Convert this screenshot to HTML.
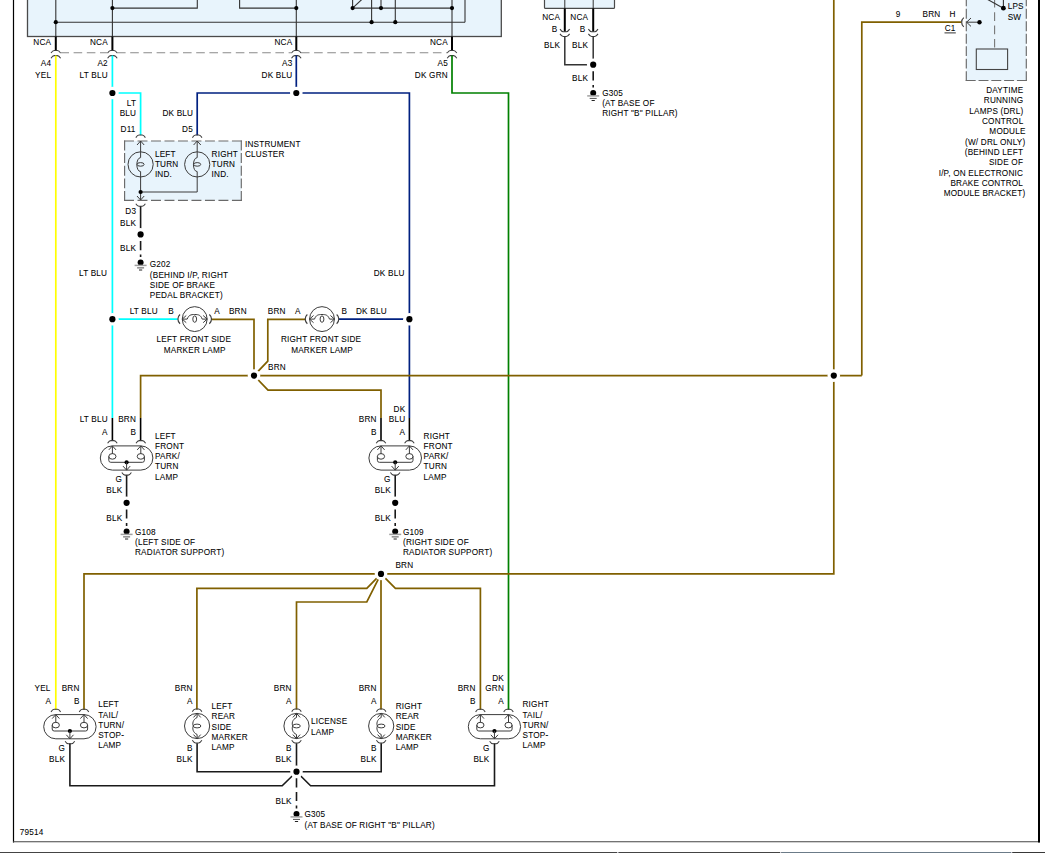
<!DOCTYPE html>
<html><head><meta charset="utf-8"><style>
html,body{margin:0;padding:0;background:#fff;}
svg{display:block;}
text{font-family:"Liberation Sans",sans-serif;stroke:#000;stroke-width:0.06px;}
</style></head><body>
<svg width="1045" height="853" viewBox="0 0 1045 853">
<rect width="1045" height="853" fill="#fff"/>
<line x1="13.5" y1="0" x2="13.5" y2="842.5" stroke="#000" stroke-width="1.2" />
<line x1="13" y1="841.8" x2="1040" y2="841.8" stroke="#444" stroke-width="1.1" />
<line x1="1039" y1="0" x2="1039" y2="842.5" stroke="#000" stroke-width="2" />
<rect x="0" y="852" width="1045" height="1" fill="#444"/>
<rect x="617" y="852" width="1.5" height="1" fill="#c8c8d0"/>
<rect x="780" y="852" width="1.5" height="1" fill="#c8c8d0"/>
<rect x="781.5" y="852" width="229.5" height="1" fill="#6b7b88"/>
<rect x="1011" y="852" width="1.5" height="1" fill="#c8c8d0"/>
<rect x="1012.5" y="852" width="32.5" height="1" fill="#383838"/>
<rect x="27.5" y="-3" width="473.8" height="39.5" fill="#e8f4fc" stroke="#4a4a4a" stroke-width="1.3"/>
<line x1="55.8" y1="-1" x2="55.8" y2="36.5" stroke="#333" stroke-width="1.1" />
<line x1="55.8" y1="22.2" x2="465" y2="22.2" stroke="#333" stroke-width="1.1" />
<line x1="465" y1="22.2" x2="465" y2="-1" stroke="#333" stroke-width="1.1" />
<polyline points="112.4,-1 112.4,36.5" fill="none" stroke="#333" stroke-width="1.1" stroke-linejoin="miter" />
<polyline points="112.4,8.1 197.3,8.1 197.3,-1" fill="none" stroke="#333" stroke-width="1.1" stroke-linejoin="miter" />
<polyline points="239.6,-1 239.6,8.1 296.3,8.1" fill="none" stroke="#333" stroke-width="1.1" stroke-linejoin="miter" />
<line x1="296.3" y1="-1" x2="296.3" y2="36.5" stroke="#333" stroke-width="1.1" />
<line x1="352.6" y1="-1" x2="352.6" y2="8.1" stroke="#333" stroke-width="1.1" />
<line x1="352.6" y1="8.1" x2="361.8" y2="-0.5" stroke="#333" stroke-width="1.1" />
<line x1="352.6" y1="8.1" x2="452" y2="8.1" stroke="#333" stroke-width="1.1" />
<line x1="371.6" y1="-1" x2="371.6" y2="22.2" stroke="#333" stroke-width="1.1" />
<line x1="381" y1="-1" x2="381" y2="8.1" stroke="#333" stroke-width="1.1" />
<line x1="395.3" y1="-1" x2="395.3" y2="22.2" stroke="#333" stroke-width="1.1" />
<line x1="452" y1="-1" x2="452" y2="36.5" stroke="#333" stroke-width="1.1" />
<circle cx="55.8" cy="22.2" r="2.1" fill="#000"/>
<circle cx="112.4" cy="8.1" r="2.1" fill="#000"/>
<circle cx="296.3" cy="8.1" r="2.1" fill="#000"/>
<circle cx="352.6" cy="8.1" r="2.1" fill="#000"/>
<circle cx="381" cy="8.1" r="2.1" fill="#000"/>
<circle cx="452" cy="8.1" r="2.1" fill="#000"/>
<circle cx="371.6" cy="22.2" r="2.1" fill="#000"/>
<circle cx="395.3" cy="22.2" r="2.1" fill="#000"/>
<line x1="55.8" y1="36.5" x2="55.8" y2="50.6" stroke="#000" stroke-width="2.0" />
<path d="M51.0,53.0 C52.3,51.0 53.2,50.4 54.199999999999996,50.4 L57.4,50.4 C58.39999999999999,50.4 59.3,51.0 60.599999999999994,53.0" fill="none" stroke="#3c3c3c" stroke-width="1.05" />
<path d="M51.0,58.2 C52.3,56.2 53.2,55.6 54.199999999999996,55.6 L57.4,55.6 C58.39999999999999,55.6 59.3,56.2 60.599999999999994,58.2" fill="none" stroke="#3c3c3c" stroke-width="1.05" />
<line x1="112.4" y1="36.5" x2="112.4" y2="50.6" stroke="#000" stroke-width="2.0" />
<path d="M107.60000000000001,53.0 C108.9,51.0 109.80000000000001,50.4 110.80000000000001,50.4 L114.0,50.4 C115.0,50.4 115.9,51.0 117.2,53.0" fill="none" stroke="#3c3c3c" stroke-width="1.05" />
<path d="M107.60000000000001,58.2 C108.9,56.2 109.80000000000001,55.6 110.80000000000001,55.6 L114.0,55.6 C115.0,55.6 115.9,56.2 117.2,58.2" fill="none" stroke="#3c3c3c" stroke-width="1.05" />
<line x1="296.3" y1="36.5" x2="296.3" y2="50.6" stroke="#000" stroke-width="2.0" />
<path d="M291.5,53.0 C292.8,51.0 293.7,50.4 294.7,50.4 L297.90000000000003,50.4 C298.90000000000003,50.4 299.8,51.0 301.1,53.0" fill="none" stroke="#3c3c3c" stroke-width="1.05" />
<path d="M291.5,58.2 C292.8,56.2 293.7,55.6 294.7,55.6 L297.90000000000003,55.6 C298.90000000000003,55.6 299.8,56.2 301.1,58.2" fill="none" stroke="#3c3c3c" stroke-width="1.05" />
<line x1="452.0" y1="36.5" x2="452.0" y2="50.6" stroke="#000" stroke-width="2.0" />
<path d="M447.2,53.0 C448.5,51.0 449.4,50.4 450.4,50.4 L453.6,50.4 C454.6,50.4 455.5,51.0 456.8,53.0" fill="none" stroke="#3c3c3c" stroke-width="1.05" />
<path d="M447.2,58.2 C448.5,56.2 449.4,55.6 450.4,55.6 L453.6,55.6 C454.6,55.6 455.5,56.2 456.8,58.2" fill="none" stroke="#3c3c3c" stroke-width="1.05" />
<line x1="60.4" y1="52.7" x2="107.80000000000001" y2="52.7" stroke="#8a8a8a" stroke-width="1.1" stroke-dasharray="8.6 4.6"/>
<line x1="117.0" y1="52.7" x2="291.7" y2="52.7" stroke="#8a8a8a" stroke-width="1.1" stroke-dasharray="8.6 4.6"/>
<line x1="300.90000000000003" y1="52.7" x2="447.4" y2="52.7" stroke="#8a8a8a" stroke-width="1.1" stroke-dasharray="8.6 4.6"/>
<text x="51.2" y="45" text-anchor="end" font-size="8.2" letter-spacing="0.2" fill="#000" >NCA</text>
<text x="51.2" y="66" text-anchor="end" font-size="8.2" letter-spacing="0.2" fill="#000" >A4</text>
<text x="51.2" y="78" text-anchor="end" font-size="8.2" letter-spacing="0.2" fill="#000" >YEL</text>
<text x="107.8" y="45" text-anchor="end" font-size="8.2" letter-spacing="0.2" fill="#000" >NCA</text>
<text x="107.8" y="66" text-anchor="end" font-size="8.2" letter-spacing="0.2" fill="#000" >A2</text>
<text x="107.8" y="78" text-anchor="end" font-size="8.2" letter-spacing="0.2" fill="#000" >LT BLU</text>
<text x="292.4" y="45" text-anchor="end" font-size="8.2" letter-spacing="0.2" fill="#000" >NCA</text>
<text x="292.4" y="66" text-anchor="end" font-size="8.2" letter-spacing="0.2" fill="#000" >A3</text>
<text x="292.4" y="78" text-anchor="end" font-size="8.2" letter-spacing="0.2" fill="#000" >DK BLU</text>
<text x="447.9" y="45" text-anchor="end" font-size="8.2" letter-spacing="0.2" fill="#000" >NCA</text>
<text x="447.9" y="66" text-anchor="end" font-size="8.2" letter-spacing="0.2" fill="#000" >A5</text>
<text x="447.9" y="78" text-anchor="end" font-size="8.2" letter-spacing="0.2" fill="#000" >DK GRN</text>
<line x1="55.8" y1="55.5" x2="55.8" y2="709.8" stroke="#ffff00" stroke-width="1.7" />
<line x1="112.4" y1="55.5" x2="112.4" y2="418" stroke="#00ffff" stroke-width="1.7" />
<line x1="112.4" y1="418" x2="112.4" y2="440.8" stroke="#000" stroke-width="1.6" />
<polyline points="112.4,93 140.6,93 140.6,135.3" fill="none" stroke="#00ffff" stroke-width="1.7" stroke-linejoin="miter" />
<polyline points="112.4,319.2 177.6,319.2" fill="none" stroke="#00ffff" stroke-width="1.7" stroke-linejoin="miter" />
<line x1="296.3" y1="55.5" x2="296.3" y2="93" stroke="#002080" stroke-width="1.7" />
<polyline points="197.2,135.3 197.2,93 409.4,93 409.4,418" fill="none" stroke="#002080" stroke-width="1.7" stroke-linejoin="miter" />
<line x1="409.4" y1="418" x2="409.4" y2="440.8" stroke="#000" stroke-width="1.6" />
<line x1="339" y1="319.2" x2="409.4" y2="319.2" stroke="#002080" stroke-width="1.7" />
<polyline points="452,55.5 452,93 508.5,93 508.5,709.8" fill="none" stroke="#008000" stroke-width="1.7" stroke-linejoin="miter" />
<polyline points="211.7,319.3 254,319.3 254,375.6" fill="none" stroke="#806000" stroke-width="1.7" stroke-linejoin="miter" />
<polyline points="305.6,319.3 267.8,319.3 267.8,361.2 254,375.6" fill="none" stroke="#806000" stroke-width="1.7" stroke-linejoin="miter" />
<polyline points="140.6,418 140.6,375.6 861.8,375.6" fill="none" stroke="#806000" stroke-width="1.7" stroke-linejoin="miter" />
<polyline points="861.8,375.6 861.8,22.2 961,22.2" fill="none" stroke="#806000" stroke-width="1.7" stroke-linejoin="miter" />
<line x1="140.6" y1="418" x2="140.6" y2="440.8" stroke="#000" stroke-width="1.6" />
<polyline points="254,375.6 268,390.2 381,390.2 381,418" fill="none" stroke="#806000" stroke-width="1.7" stroke-linejoin="miter" />
<line x1="381" y1="418" x2="381" y2="440.8" stroke="#000" stroke-width="1.6" />
<polyline points="84,709.8 84,573.9 833.8,573.9 833.8,-1" fill="none" stroke="#806000" stroke-width="1.7" stroke-linejoin="miter" />
<polyline points="381,573.9 366.8,588.4 196.9,588.4 196.9,709.6" fill="none" stroke="#806000" stroke-width="1.7" stroke-linejoin="miter" />
<polyline points="381,573.9 366.8,602 296.5,602 296.5,709.6" fill="none" stroke="#806000" stroke-width="1.7" stroke-linejoin="miter" />
<line x1="381" y1="573.9" x2="381" y2="709.6" stroke="#806000" stroke-width="1.7" />
<polyline points="381,573.9 395.4,588.4 480.4,588.4 480.4,709.8" fill="none" stroke="#806000" stroke-width="1.7" stroke-linejoin="miter" />
<rect x="124.6" y="141" width="116.7" height="59.4" fill="#e8f4fc"/>
<line x1="124.6" y1="141" x2="241.3" y2="141" stroke="#6a6a6a" stroke-width="1.15" stroke-dasharray="8.8 4.688" stroke-linecap="square"/>
<line x1="241.3" y1="141" x2="241.3" y2="200.4" stroke="#6a6a6a" stroke-width="1.15" stroke-dasharray="8.8 3.850" stroke-linecap="square"/>
<line x1="124.6" y1="200.4" x2="241.3" y2="200.4" stroke="#6a6a6a" stroke-width="1.15" stroke-dasharray="8.8 4.688" stroke-linecap="square"/>
<line x1="124.6" y1="141" x2="124.6" y2="200.4" stroke="#6a6a6a" stroke-width="1.15" stroke-dasharray="8.8 3.850" stroke-linecap="square"/>
<path d="M135.79999999999998,137.6 C137.1,135.6 137.99999999999997,135.0 139.0,135.0 L142.2,135.0 C143.20000000000002,135.0 144.1,135.6 145.4,137.6" fill="none" stroke="#3c3c3c" stroke-width="1.05" />
<path d="M192.39999999999998,137.6 C193.7,135.6 194.59999999999997,135.0 195.6,135.0 L198.79999999999998,135.0 C199.8,135.0 200.7,135.6 202.0,137.6" fill="none" stroke="#3c3c3c" stroke-width="1.05" />
<path d="M137.0,145 L140.6,141 L144.2,145" fill="none" stroke="#3c3c3c" stroke-width="1.0" />
<path d="M193.6,145 L197.2,141 L200.79999999999998,145" fill="none" stroke="#3c3c3c" stroke-width="1.0" />
<circle cx="140.6" cy="164.4" r="12.6" fill="none" stroke="#3c3c3c" stroke-width="1"/>
<path d="M140.6,157.6 C135.6,157.9 135.6,171.4 140.6,171.6" fill="none" stroke="#3c3c3c" stroke-width="1.0" />
<ellipse cx="140.6" cy="164.4" rx="3.5" ry="1.8" fill="none" stroke="#3c3c3c" stroke-width="1"/>
<circle cx="197.2" cy="164.4" r="12.6" fill="none" stroke="#3c3c3c" stroke-width="1"/>
<path d="M197.2,157.6 C192.2,157.9 192.2,171.4 197.2,171.6" fill="none" stroke="#3c3c3c" stroke-width="1.0" />
<ellipse cx="197.2" cy="164.4" rx="3.5" ry="1.8" fill="none" stroke="#3c3c3c" stroke-width="1"/>
<line x1="140.6" y1="141" x2="140.6" y2="157.6" stroke="#3c3c3c" stroke-width="1.0" />
<line x1="140.6" y1="171.6" x2="140.6" y2="200" stroke="#3c3c3c" stroke-width="1.0" />
<path d="M197.2,141 L197.2,157.6 M197.2,171.6 L197.2,192 L140.6,192" fill="none" stroke="#3c3c3c" stroke-width="1.0" />
<circle cx="140.6" cy="192" r="2.1" fill="#000"/>
<path d="M137.0,196 L140.6,200 L144.2,196" fill="none" stroke="#3c3c3c" stroke-width="1.0" />
<path d="M135.79999999999998,203.70000000000002 C137.1,205.70000000000002 137.99999999999997,206.3 139.0,206.3 L142.2,206.3 C143.20000000000002,206.3 144.1,205.70000000000002 145.4,203.70000000000002" fill="none" stroke="#3c3c3c" stroke-width="1.05" />
<text x="245" y="147" text-anchor="start" font-size="8.2" letter-spacing="0.2" fill="#000" >INSTRUMENT</text>
<text x="245" y="157" text-anchor="start" font-size="8.2" letter-spacing="0.2" fill="#000" >CLUSTER</text>
<text x="154.9" y="157" text-anchor="start" font-size="8.2" letter-spacing="0.2" fill="#000" >LEFT</text>
<text x="154.9" y="167" text-anchor="start" font-size="8.2" letter-spacing="0.2" fill="#000" >TURN</text>
<text x="154.9" y="177" text-anchor="start" font-size="8.2" letter-spacing="0.2" fill="#000" >IND.</text>
<text x="211.6" y="157" text-anchor="start" font-size="8.2" letter-spacing="0.2" fill="#000" >RIGHT</text>
<text x="211.6" y="167" text-anchor="start" font-size="8.2" letter-spacing="0.2" fill="#000" >TURN</text>
<text x="211.6" y="177" text-anchor="start" font-size="8.2" letter-spacing="0.2" fill="#000" >IND.</text>
<text x="136.2" y="106" text-anchor="end" font-size="8.2" letter-spacing="0.2" fill="#000" >LT</text>
<text x="136.2" y="116" text-anchor="end" font-size="8.2" letter-spacing="0.2" fill="#000" >BLU</text>
<text x="193.2" y="116" text-anchor="end" font-size="8.2" letter-spacing="0.2" fill="#000" >DK BLU</text>
<text x="135.6" y="132" text-anchor="end" font-size="8.2" letter-spacing="0.2" fill="#000" >D11</text>
<text x="192.89999999999998" y="132" text-anchor="end" font-size="8.2" letter-spacing="0.2" fill="#000" >D5</text>
<line x1="140.6" y1="206.3" x2="140.6" y2="234.4" stroke="#1a1a1a" stroke-width="1.6" />
<text x="136.2" y="214" text-anchor="end" font-size="8.2" letter-spacing="0.2" fill="#000" >D3</text>
<text x="136.2" y="226" text-anchor="end" font-size="8.2" letter-spacing="0.2" fill="#000" >BLK</text>
<text x="136.2" y="251" text-anchor="end" font-size="8.2" letter-spacing="0.2" fill="#000" >BLK</text>
<line x1="140.6" y1="241.0" x2="140.6" y2="257.0" stroke="#1a1a1a" stroke-width="1.6" stroke-dasharray="9.2 4.4"/>
<circle cx="140.6" cy="234.4" r="6.3" fill="#fff"/>
<circle cx="140.6" cy="234.4" r="3.1" fill="#000"/>
<circle cx="140.6" cy="262.5" r="3.0" fill="#000"/>
<line x1="134.6" y1="265.4" x2="146.6" y2="265.4" stroke="#a0a0a0" stroke-width="1.5" />
<line x1="137.1" y1="267.9" x2="144.1" y2="267.9" stroke="#505050" stroke-width="1.0" />
<line x1="139.0" y1="270.0" x2="142.2" y2="270.0" stroke="#222" stroke-width="1.0" />
<text x="149.8" y="267" text-anchor="start" font-size="8.2" letter-spacing="0.2" fill="#000" >G202</text>
<text x="149.8" y="278" text-anchor="start" font-size="8.2" letter-spacing="0.2" fill="#000" >(BEHIND I/P, RIGHT</text>
<text x="149.8" y="288" text-anchor="start" font-size="8.2" letter-spacing="0.2" fill="#000" >SIDE OF BRAKE</text>
<text x="149.8" y="298" text-anchor="start" font-size="8.2" letter-spacing="0.2" fill="#000" >PEDAL BRACKET)</text>
<text x="107.2" y="276" text-anchor="end" font-size="8.2" letter-spacing="0.2" fill="#000" >LT BLU</text>
<text x="404.5" y="276" text-anchor="end" font-size="8.2" letter-spacing="0.2" fill="#000" >DK BLU</text>
<path d="M180.05,314.5 A6,6 0 0 0 180.05,323.70000000000005" fill="none" stroke="#3c3c3c" stroke-width="1.2" />
<path d="M209.34999999999997,314.5 A6,6 0 0 1 209.34999999999997,323.70000000000005" fill="none" stroke="#3c3c3c" stroke-width="1.2" />
<circle cx="194.7" cy="319.1" r="12.45" fill="none" stroke="#3c3c3c" stroke-width="1"/>
<path d="M186.25,315.5 L182.25,319.1 L186.25,322.70000000000005" fill="none" stroke="#3c3c3c" stroke-width="1.0" />
<path d="M203.14999999999998,315.5 L207.14999999999998,319.1 L203.14999999999998,322.70000000000005" fill="none" stroke="#3c3c3c" stroke-width="1.0" />
<path d="M182.25,319.1 L187.2,319.1 C188.7,315.1 190.7,314.5 194.7,314.5 C198.7,314.5 200.7,315.1 202.2,319.1 L207.14999999999998,319.1" fill="none" stroke="#3c3c3c" stroke-width="1.0" />
<ellipse cx="194.7" cy="319.1" rx="1.9" ry="3.2" fill="none" stroke="#3c3c3c" stroke-width="1"/>
<path d="M307.35,314.5 A6,6 0 0 0 307.35,323.70000000000005" fill="none" stroke="#3c3c3c" stroke-width="1.2" />
<path d="M336.65,314.5 A6,6 0 0 1 336.65,323.70000000000005" fill="none" stroke="#3c3c3c" stroke-width="1.2" />
<circle cx="322" cy="319.1" r="12.45" fill="none" stroke="#3c3c3c" stroke-width="1"/>
<path d="M313.55,315.5 L309.55,319.1 L313.55,322.70000000000005" fill="none" stroke="#3c3c3c" stroke-width="1.0" />
<path d="M330.45,315.5 L334.45,319.1 L330.45,322.70000000000005" fill="none" stroke="#3c3c3c" stroke-width="1.0" />
<path d="M309.55,319.1 L314.5,319.1 C316,315.1 318,314.5 322,314.5 C326,314.5 328,315.1 329.5,319.1 L334.45,319.1" fill="none" stroke="#3c3c3c" stroke-width="1.0" />
<ellipse cx="322" cy="319.1" rx="1.9" ry="3.2" fill="none" stroke="#3c3c3c" stroke-width="1"/>
<text x="129.7" y="314" text-anchor="start" font-size="8.2" letter-spacing="0.2" fill="#000" >LT BLU</text>
<text x="168.3" y="314" text-anchor="start" font-size="8.2" letter-spacing="0.2" fill="#000" >B</text>
<text x="214.3" y="314" text-anchor="start" font-size="8.2" letter-spacing="0.2" fill="#000" >A</text>
<text x="228.9" y="314" text-anchor="start" font-size="8.2" letter-spacing="0.2" fill="#000" >BRN</text>
<text x="267.8" y="314" text-anchor="start" font-size="8.2" letter-spacing="0.2" fill="#000" >BRN</text>
<text x="295" y="314" text-anchor="start" font-size="8.2" letter-spacing="0.2" fill="#000" >A</text>
<text x="341.6" y="314" text-anchor="start" font-size="8.2" letter-spacing="0.2" fill="#000" >B</text>
<text x="356" y="314" text-anchor="start" font-size="8.2" letter-spacing="0.2" fill="#000" >DK BLU</text>
<text x="193.79999999999998" y="342" text-anchor="middle" font-size="8.2" letter-spacing="0.2" fill="#000" >LEFT FRONT SIDE</text>
<text x="194.7" y="353" text-anchor="middle" font-size="8.2" letter-spacing="0.2" fill="#000" >MARKER LAMP</text>
<text x="321.1" y="342" text-anchor="middle" font-size="8.2" letter-spacing="0.2" fill="#000" >RIGHT FRONT SIDE</text>
<text x="322.1" y="353" text-anchor="middle" font-size="8.2" letter-spacing="0.2" fill="#000" >MARKER LAMP</text>
<text x="268" y="370" text-anchor="start" font-size="8.2" letter-spacing="0.2" fill="#000" >BRN</text>
<path d="M107.60000000000001,443.2 C108.9,441.2 109.80000000000001,440.59999999999997 110.80000000000001,440.59999999999997 L114.0,440.59999999999997 C115.0,440.59999999999997 115.9,441.2 117.2,443.2" fill="none" stroke="#3c3c3c" stroke-width="1.05" />
<path d="M136.0,443.2 C137.3,441.2 138.2,440.59999999999997 139.20000000000002,440.59999999999997 L142.4,440.59999999999997 C143.40000000000003,440.59999999999997 144.3,441.2 145.60000000000002,443.2" fill="none" stroke="#3c3c3c" stroke-width="1.05" />
<path d="M112.4,445.9 L140.8,445.9 A12.1,12.1 0 0 1 140.8,470.09999999999997 L112.4,470.09999999999997 A12.1,12.1 0 0 1 112.4,445.9 Z" fill="none" stroke="#3c3c3c" stroke-width="1.0" />
<path d="M108.80000000000001,449.9 L112.4,445.9 L116.0,449.9" fill="none" stroke="#3c3c3c" stroke-width="1.0" />
<path d="M137.20000000000002,449.9 L140.8,445.9 L144.4,449.9" fill="none" stroke="#3c3c3c" stroke-width="1.0" />
<path d="M112.4,445.9 L112.4,454.0 M108.80000000000001,456.4 L108.80000000000001,460.29999999999995 Q108.80000000000001,462.29999999999995 110.80000000000001,462.29999999999995 L142.4,462.29999999999995 Q144.4,462.29999999999995 144.4,460.29999999999995 L144.4,456.4 M140.8,445.9 L140.8,454.0" fill="none" stroke="#3c3c3c" stroke-width="1.0" />
<ellipse cx="112.4" cy="456.4" rx="3.6" ry="2.8" fill="none" stroke="#3c3c3c" stroke-width="1"/>
<ellipse cx="140.8" cy="456.4" rx="3.6" ry="2.8" fill="none" stroke="#3c3c3c" stroke-width="1"/>
<circle cx="126.60000000000001" cy="462.29999999999995" r="2.1" fill="#000"/>
<line x1="126.60000000000001" y1="462.29999999999995" x2="126.60000000000001" y2="470.09999999999997" stroke="#3c3c3c" stroke-width="1.0" />
<path d="M123.00000000000001,466.09999999999997 L126.60000000000001,470.09999999999997 L130.20000000000002,466.09999999999997" fill="none" stroke="#3c3c3c" stroke-width="1.0" />
<path d="M121.80000000000001,472.49999999999994 C123.10000000000001,474.49999999999994 124.00000000000001,475.09999999999997 125.00000000000001,475.09999999999997 L128.20000000000002,475.09999999999997 C129.20000000000002,475.09999999999997 130.1,474.49999999999994 131.4,472.49999999999994" fill="none" stroke="#3c3c3c" stroke-width="1.05" />
<path d="M376.2,443.2 C377.5,441.2 378.4,440.59999999999997 379.4,440.59999999999997 L382.6,440.59999999999997 C383.6,440.59999999999997 384.5,441.2 385.8,443.2" fill="none" stroke="#3c3c3c" stroke-width="1.05" />
<path d="M404.59999999999997,443.2 C405.9,441.2 406.79999999999995,440.59999999999997 407.79999999999995,440.59999999999997 L411.0,440.59999999999997 C412.0,440.59999999999997 412.9,441.2 414.2,443.2" fill="none" stroke="#3c3c3c" stroke-width="1.05" />
<path d="M381,445.9 L409.4,445.9 A12.1,12.1 0 0 1 409.4,470.09999999999997 L381,470.09999999999997 A12.1,12.1 0 0 1 381,445.9 Z" fill="none" stroke="#3c3c3c" stroke-width="1.0" />
<path d="M377.4,449.9 L381,445.9 L384.6,449.9" fill="none" stroke="#3c3c3c" stroke-width="1.0" />
<path d="M405.79999999999995,449.9 L409.4,445.9 L413.0,449.9" fill="none" stroke="#3c3c3c" stroke-width="1.0" />
<path d="M381,445.9 L381,454.0 M377.4,456.4 L377.4,460.29999999999995 Q377.4,462.29999999999995 379.4,462.29999999999995 L411.0,462.29999999999995 Q413.0,462.29999999999995 413.0,460.29999999999995 L413.0,456.4 M409.4,445.9 L409.4,454.0" fill="none" stroke="#3c3c3c" stroke-width="1.0" />
<ellipse cx="381" cy="456.4" rx="3.6" ry="2.8" fill="none" stroke="#3c3c3c" stroke-width="1"/>
<ellipse cx="409.4" cy="456.4" rx="3.6" ry="2.8" fill="none" stroke="#3c3c3c" stroke-width="1"/>
<circle cx="395.2" cy="462.29999999999995" r="2.1" fill="#000"/>
<line x1="395.2" y1="462.29999999999995" x2="395.2" y2="470.09999999999997" stroke="#3c3c3c" stroke-width="1.0" />
<path d="M391.59999999999997,466.09999999999997 L395.2,470.09999999999997 L398.8,466.09999999999997" fill="none" stroke="#3c3c3c" stroke-width="1.0" />
<path d="M390.4,472.49999999999994 C391.7,474.49999999999994 392.59999999999997,475.09999999999997 393.59999999999997,475.09999999999997 L396.8,475.09999999999997 C397.8,475.09999999999997 398.7,474.49999999999994 400.0,472.49999999999994" fill="none" stroke="#3c3c3c" stroke-width="1.05" />
<text x="107.9" y="422" text-anchor="end" font-size="8.2" letter-spacing="0.2" fill="#000" >LT BLU</text>
<text x="136.1" y="422" text-anchor="end" font-size="8.2" letter-spacing="0.2" fill="#000" >BRN</text>
<text x="107.7" y="435" text-anchor="end" font-size="8.2" letter-spacing="0.2" fill="#000" >A</text>
<text x="136.2" y="435" text-anchor="end" font-size="8.2" letter-spacing="0.2" fill="#000" >B</text>
<text x="122.0" y="482" text-anchor="end" font-size="8.2" letter-spacing="0.2" fill="#000" >G</text>
<text x="122.3" y="493" text-anchor="end" font-size="8.2" letter-spacing="0.2" fill="#000" >BLK</text>
<text x="122.3" y="521" text-anchor="end" font-size="8.2" letter-spacing="0.2" fill="#000" >BLK</text>
<text x="155" y="439" text-anchor="start" font-size="8.2" letter-spacing="0.2" fill="#000" >LEFT</text>
<text x="155" y="449" text-anchor="start" font-size="8.2" letter-spacing="0.2" fill="#000" >FRONT</text>
<text x="155" y="459" text-anchor="start" font-size="8.2" letter-spacing="0.2" fill="#000" >PARK/</text>
<text x="155" y="469" text-anchor="start" font-size="8.2" letter-spacing="0.2" fill="#000" >TURN</text>
<text x="155" y="480" text-anchor="start" font-size="8.2" letter-spacing="0.2" fill="#000" >LAMP</text>
<line x1="126.6" y1="475.3" x2="126.6" y2="502.8" stroke="#1a1a1a" stroke-width="1.6" />
<line x1="126.6" y1="509.40000000000003" x2="126.6" y2="526.0" stroke="#1a1a1a" stroke-width="1.6" stroke-dasharray="9.2 4.4"/>
<circle cx="126.6" cy="502.8" r="6.3" fill="#fff"/>
<circle cx="126.6" cy="502.8" r="3.1" fill="#000"/>
<circle cx="126.6" cy="531.5" r="3.0" fill="#000"/>
<line x1="120.6" y1="534.4" x2="132.6" y2="534.4" stroke="#a0a0a0" stroke-width="1.5" />
<line x1="123.1" y1="536.9" x2="130.1" y2="536.9" stroke="#505050" stroke-width="1.0" />
<line x1="125.0" y1="539.0" x2="128.2" y2="539.0" stroke="#222" stroke-width="1.0" />
<text x="135" y="535" text-anchor="start" font-size="8.2" letter-spacing="0.2" fill="#000" >G108</text>
<text x="135" y="545" text-anchor="start" font-size="8.2" letter-spacing="0.2" fill="#000" >(LEFT SIDE OF</text>
<text x="135" y="555" text-anchor="start" font-size="8.2" letter-spacing="0.2" fill="#000" >RADIATOR SUPPORT)</text>
<text x="376.7" y="422" text-anchor="end" font-size="8.2" letter-spacing="0.2" fill="#000" >BRN</text>
<text x="405.4" y="412" text-anchor="end" font-size="8.2" letter-spacing="0.2" fill="#000" >DK</text>
<text x="405.4" y="422" text-anchor="end" font-size="8.2" letter-spacing="0.2" fill="#000" >BLU</text>
<text x="376.7" y="435" text-anchor="end" font-size="8.2" letter-spacing="0.2" fill="#000" >B</text>
<text x="405.2" y="435" text-anchor="end" font-size="8.2" letter-spacing="0.2" fill="#000" >A</text>
<text x="390.59999999999997" y="482" text-anchor="end" font-size="8.2" letter-spacing="0.2" fill="#000" >G</text>
<text x="390.8" y="493" text-anchor="end" font-size="8.2" letter-spacing="0.2" fill="#000" >BLK</text>
<text x="390.8" y="521" text-anchor="end" font-size="8.2" letter-spacing="0.2" fill="#000" >BLK</text>
<text x="423.6" y="439" text-anchor="start" font-size="8.2" letter-spacing="0.2" fill="#000" >RIGHT</text>
<text x="423.6" y="449" text-anchor="start" font-size="8.2" letter-spacing="0.2" fill="#000" >FRONT</text>
<text x="423.6" y="459" text-anchor="start" font-size="8.2" letter-spacing="0.2" fill="#000" >PARK/</text>
<text x="423.6" y="469" text-anchor="start" font-size="8.2" letter-spacing="0.2" fill="#000" >TURN</text>
<text x="423.6" y="480" text-anchor="start" font-size="8.2" letter-spacing="0.2" fill="#000" >LAMP</text>
<line x1="395.2" y1="475.3" x2="395.2" y2="502.8" stroke="#1a1a1a" stroke-width="1.6" />
<line x1="395.2" y1="509.40000000000003" x2="395.2" y2="526.0" stroke="#1a1a1a" stroke-width="1.6" stroke-dasharray="9.2 4.4"/>
<circle cx="395.2" cy="502.8" r="6.3" fill="#fff"/>
<circle cx="395.2" cy="502.8" r="3.1" fill="#000"/>
<circle cx="395.2" cy="531.5" r="3.0" fill="#000"/>
<line x1="389.2" y1="534.4" x2="401.2" y2="534.4" stroke="#a0a0a0" stroke-width="1.5" />
<line x1="391.7" y1="536.9" x2="398.7" y2="536.9" stroke="#505050" stroke-width="1.0" />
<line x1="393.59999999999997" y1="539.0" x2="396.8" y2="539.0" stroke="#222" stroke-width="1.0" />
<text x="403" y="535" text-anchor="start" font-size="8.2" letter-spacing="0.2" fill="#000" >G109</text>
<text x="403" y="545" text-anchor="start" font-size="8.2" letter-spacing="0.2" fill="#000" >(RIGHT SIDE OF</text>
<text x="403" y="555" text-anchor="start" font-size="8.2" letter-spacing="0.2" fill="#000" >RADIATOR SUPPORT)</text>
<text x="395.4" y="568" text-anchor="start" font-size="8.2" letter-spacing="0.2" fill="#000" >BRN</text>
<path d="M51.0,711.9000000000001 C52.3,709.9000000000001 53.2,709.3000000000001 54.199999999999996,709.3000000000001 L57.4,709.3000000000001 C58.39999999999999,709.3000000000001 59.3,709.9000000000001 60.599999999999994,711.9000000000001" fill="none" stroke="#3c3c3c" stroke-width="1.05" />
<path d="M79.2,711.9000000000001 C80.5,709.9000000000001 81.4,709.3000000000001 82.4,709.3000000000001 L85.6,709.3000000000001 C86.6,709.3000000000001 87.5,709.9000000000001 88.8,711.9000000000001" fill="none" stroke="#3c3c3c" stroke-width="1.05" />
<path d="M55.8,714.6 L84,714.6 A12.1,12.1 0 0 1 84,738.8000000000001 L55.8,738.8000000000001 A12.1,12.1 0 0 1 55.8,714.6 Z" fill="none" stroke="#3c3c3c" stroke-width="1.0" />
<path d="M52.199999999999996,718.6 L55.8,714.6 L59.4,718.6" fill="none" stroke="#3c3c3c" stroke-width="1.0" />
<path d="M80.4,718.6 L84,714.6 L87.6,718.6" fill="none" stroke="#3c3c3c" stroke-width="1.0" />
<path d="M55.8,714.6 L55.8,722.7 M52.199999999999996,725.1 L52.199999999999996,729.0 Q52.199999999999996,731.0 54.199999999999996,731.0 L85.6,731.0 Q87.6,731.0 87.6,729.0 L87.6,725.1 M84,714.6 L84,722.7" fill="none" stroke="#3c3c3c" stroke-width="1.0" />
<ellipse cx="55.8" cy="725.1" rx="3.6" ry="2.8" fill="none" stroke="#3c3c3c" stroke-width="1"/>
<ellipse cx="84" cy="725.1" rx="3.6" ry="2.8" fill="none" stroke="#3c3c3c" stroke-width="1"/>
<circle cx="69.9" cy="731.0" r="2.1" fill="#000"/>
<line x1="69.9" y1="731.0" x2="69.9" y2="738.8000000000001" stroke="#3c3c3c" stroke-width="1.0" />
<path d="M66.30000000000001,734.8000000000001 L69.9,738.8000000000001 L73.5,734.8000000000001" fill="none" stroke="#3c3c3c" stroke-width="1.0" />
<path d="M65.10000000000001,741.2 C66.4,743.2 67.30000000000001,743.8000000000001 68.30000000000001,743.8000000000001 L71.5,743.8000000000001 C72.5,743.8000000000001 73.4,743.2 74.7,741.2" fill="none" stroke="#3c3c3c" stroke-width="1.05" />
<path d="M192.29999999999998,711.6 C193.6,709.6 194.49999999999997,709.0 195.5,709.0 L198.7,709.0 C199.70000000000002,709.0 200.6,709.6 201.9,711.6" fill="none" stroke="#3c3c3c" stroke-width="1.05" />
<path d="M192.29999999999998,740.3 C193.6,742.3 194.49999999999997,742.9 195.5,742.9 L198.7,742.9 C199.70000000000002,742.9 200.6,742.3 201.9,740.3" fill="none" stroke="#3c3c3c" stroke-width="1.05" />
<circle cx="197.1" cy="726" r="12.6" fill="none" stroke="#3c3c3c" stroke-width="1"/>
<path d="M193.5,717.4 L197.1,713.4 L200.7,717.4" fill="none" stroke="#3c3c3c" stroke-width="1.0" />
<path d="M193.5,734.6 L197.1,738.6 L200.7,734.6" fill="none" stroke="#3c3c3c" stroke-width="1.0" />
<path d="M197.1,713.4 L197.1,717.5 C192.6,719.5 192.29999999999998,724 193.29999999999998,726 C192.29999999999998,728 192.6,732.5 197.1,734.5 L197.1,738.6" fill="none" stroke="#3c3c3c" stroke-width="1.0" />
<ellipse cx="197.1" cy="726" rx="3.8" ry="1.9" fill="none" stroke="#3c3c3c" stroke-width="1"/>
<path d="M291.7,711.6 C293.0,709.6 293.9,709.0 294.9,709.0 L298.1,709.0 C299.1,709.0 300.0,709.6 301.3,711.6" fill="none" stroke="#3c3c3c" stroke-width="1.05" />
<path d="M291.7,740.3 C293.0,742.3 293.9,742.9 294.9,742.9 L298.1,742.9 C299.1,742.9 300.0,742.3 301.3,740.3" fill="none" stroke="#3c3c3c" stroke-width="1.05" />
<circle cx="296.5" cy="726" r="12.6" fill="none" stroke="#3c3c3c" stroke-width="1"/>
<path d="M292.9,717.4 L296.5,713.4 L300.1,717.4" fill="none" stroke="#3c3c3c" stroke-width="1.0" />
<path d="M292.9,734.6 L296.5,738.6 L300.1,734.6" fill="none" stroke="#3c3c3c" stroke-width="1.0" />
<path d="M296.5,713.4 L296.5,717.5 C292.0,719.5 291.7,724 292.7,726 C291.7,728 292.0,732.5 296.5,734.5 L296.5,738.6" fill="none" stroke="#3c3c3c" stroke-width="1.0" />
<ellipse cx="296.5" cy="726" rx="3.8" ry="1.9" fill="none" stroke="#3c3c3c" stroke-width="1"/>
<path d="M376.4,711.6 C377.7,709.6 378.59999999999997,709.0 379.59999999999997,709.0 L382.8,709.0 C383.8,709.0 384.7,709.6 386.0,711.6" fill="none" stroke="#3c3c3c" stroke-width="1.05" />
<path d="M376.4,740.3 C377.7,742.3 378.59999999999997,742.9 379.59999999999997,742.9 L382.8,742.9 C383.8,742.9 384.7,742.3 386.0,740.3" fill="none" stroke="#3c3c3c" stroke-width="1.05" />
<circle cx="381.2" cy="726" r="12.6" fill="none" stroke="#3c3c3c" stroke-width="1"/>
<path d="M377.59999999999997,717.4 L381.2,713.4 L384.8,717.4" fill="none" stroke="#3c3c3c" stroke-width="1.0" />
<path d="M377.59999999999997,734.6 L381.2,738.6 L384.8,734.6" fill="none" stroke="#3c3c3c" stroke-width="1.0" />
<path d="M381.2,713.4 L381.2,717.5 C376.7,719.5 376.4,724 377.4,726 C376.4,728 376.7,732.5 381.2,734.5 L381.2,738.6" fill="none" stroke="#3c3c3c" stroke-width="1.0" />
<ellipse cx="381.2" cy="726" rx="3.8" ry="1.9" fill="none" stroke="#3c3c3c" stroke-width="1"/>
<path d="M475.59999999999997,711.9000000000001 C476.9,709.9000000000001 477.79999999999995,709.3000000000001 478.79999999999995,709.3000000000001 L482.0,709.3000000000001 C483.0,709.3000000000001 483.9,709.9000000000001 485.2,711.9000000000001" fill="none" stroke="#3c3c3c" stroke-width="1.05" />
<path d="M503.7,711.9000000000001 C505.0,709.9000000000001 505.9,709.3000000000001 506.9,709.3000000000001 L510.1,709.3000000000001 C511.09999999999997,709.3000000000001 511.99999999999994,709.9000000000001 513.3,711.9000000000001" fill="none" stroke="#3c3c3c" stroke-width="1.05" />
<path d="M480.4,714.6 L508.5,714.6 A12.1,12.1 0 0 1 508.5,738.8000000000001 L480.4,738.8000000000001 A12.1,12.1 0 0 1 480.4,714.6 Z" fill="none" stroke="#3c3c3c" stroke-width="1.0" />
<path d="M476.79999999999995,718.6 L480.4,714.6 L484.0,718.6" fill="none" stroke="#3c3c3c" stroke-width="1.0" />
<path d="M504.9,718.6 L508.5,714.6 L512.1,718.6" fill="none" stroke="#3c3c3c" stroke-width="1.0" />
<path d="M480.4,714.6 L480.4,722.7 M476.79999999999995,725.1 L476.79999999999995,729.0 Q476.79999999999995,731.0 478.79999999999995,731.0 L510.1,731.0 Q512.1,731.0 512.1,729.0 L512.1,725.1 M508.5,714.6 L508.5,722.7" fill="none" stroke="#3c3c3c" stroke-width="1.0" />
<ellipse cx="480.4" cy="725.1" rx="3.6" ry="2.8" fill="none" stroke="#3c3c3c" stroke-width="1"/>
<ellipse cx="508.5" cy="725.1" rx="3.6" ry="2.8" fill="none" stroke="#3c3c3c" stroke-width="1"/>
<circle cx="494.45" cy="731.0" r="2.1" fill="#000"/>
<line x1="494.45" y1="731.0" x2="494.45" y2="738.8000000000001" stroke="#3c3c3c" stroke-width="1.0" />
<path d="M490.84999999999997,734.8000000000001 L494.45,738.8000000000001 L498.05,734.8000000000001" fill="none" stroke="#3c3c3c" stroke-width="1.0" />
<path d="M489.65,741.2 C490.95,743.2 491.84999999999997,743.8000000000001 492.84999999999997,743.8000000000001 L496.05,743.8000000000001 C497.05,743.8000000000001 497.95,743.2 499.25,741.2" fill="none" stroke="#3c3c3c" stroke-width="1.05" />
<text x="50.6" y="691" text-anchor="end" font-size="8.2" letter-spacing="0.2" fill="#000" >YEL</text>
<text x="79.60000000000001" y="691" text-anchor="end" font-size="8.2" letter-spacing="0.2" fill="#000" >BRN</text>
<text x="51.1" y="704" text-anchor="end" font-size="8.2" letter-spacing="0.2" fill="#000" >A</text>
<text x="79.60000000000001" y="704" text-anchor="end" font-size="8.2" letter-spacing="0.2" fill="#000" >B</text>
<text x="65.2" y="751" text-anchor="end" font-size="8.2" letter-spacing="0.2" fill="#000" >G</text>
<text x="65.2" y="762" text-anchor="end" font-size="8.2" letter-spacing="0.2" fill="#000" >BLK</text>
<text x="98.2" y="707" text-anchor="start" font-size="8.2" letter-spacing="0.2" fill="#000" >LEFT</text>
<text x="98.2" y="718" text-anchor="start" font-size="8.2" letter-spacing="0.2" fill="#000" >TAIL/</text>
<text x="98.2" y="728" text-anchor="start" font-size="8.2" letter-spacing="0.2" fill="#000" >TURN/</text>
<text x="98.2" y="738" text-anchor="start" font-size="8.2" letter-spacing="0.2" fill="#000" >STOP-</text>
<text x="98.2" y="748" text-anchor="start" font-size="8.2" letter-spacing="0.2" fill="#000" >LAMP</text>
<text x="192.7" y="691" text-anchor="end" font-size="8.2" letter-spacing="0.2" fill="#000" >BRN</text>
<text x="192.7" y="704" text-anchor="end" font-size="8.2" letter-spacing="0.2" fill="#000" >A</text>
<text x="192.7" y="751" text-anchor="end" font-size="8.2" letter-spacing="0.2" fill="#000" >B</text>
<text x="192.7" y="762" text-anchor="end" font-size="8.2" letter-spacing="0.2" fill="#000" >BLK</text>
<text x="291.7" y="691" text-anchor="end" font-size="8.2" letter-spacing="0.2" fill="#000" >BRN</text>
<text x="291.7" y="704" text-anchor="end" font-size="8.2" letter-spacing="0.2" fill="#000" >A</text>
<text x="291.7" y="751" text-anchor="end" font-size="8.2" letter-spacing="0.2" fill="#000" >B</text>
<text x="291.7" y="762" text-anchor="end" font-size="8.2" letter-spacing="0.2" fill="#000" >BLK</text>
<text x="376.59999999999997" y="691" text-anchor="end" font-size="8.2" letter-spacing="0.2" fill="#000" >BRN</text>
<text x="376.59999999999997" y="704" text-anchor="end" font-size="8.2" letter-spacing="0.2" fill="#000" >A</text>
<text x="376.59999999999997" y="751" text-anchor="end" font-size="8.2" letter-spacing="0.2" fill="#000" >B</text>
<text x="376.59999999999997" y="762" text-anchor="end" font-size="8.2" letter-spacing="0.2" fill="#000" >BLK</text>
<text x="211.6" y="709" text-anchor="start" font-size="8.2" letter-spacing="0.2" fill="#000" >LEFT</text>
<text x="211.6" y="719" text-anchor="start" font-size="8.2" letter-spacing="0.2" fill="#000" >REAR</text>
<text x="211.6" y="730" text-anchor="start" font-size="8.2" letter-spacing="0.2" fill="#000" >SIDE</text>
<text x="211.6" y="740" text-anchor="start" font-size="8.2" letter-spacing="0.2" fill="#000" >MARKER</text>
<text x="211.6" y="750" text-anchor="start" font-size="8.2" letter-spacing="0.2" fill="#000" >LAMP</text>
<text x="395.7" y="709" text-anchor="start" font-size="8.2" letter-spacing="0.2" fill="#000" >RIGHT</text>
<text x="395.7" y="719" text-anchor="start" font-size="8.2" letter-spacing="0.2" fill="#000" >REAR</text>
<text x="395.7" y="730" text-anchor="start" font-size="8.2" letter-spacing="0.2" fill="#000" >SIDE</text>
<text x="395.7" y="740" text-anchor="start" font-size="8.2" letter-spacing="0.2" fill="#000" >MARKER</text>
<text x="395.7" y="750" text-anchor="start" font-size="8.2" letter-spacing="0.2" fill="#000" >LAMP</text>
<text x="311" y="724" text-anchor="start" font-size="8.2" letter-spacing="0.2" fill="#000" >LICENSE</text>
<text x="311" y="735" text-anchor="start" font-size="8.2" letter-spacing="0.2" fill="#000" >LAMP</text>
<text x="475.59999999999997" y="691" text-anchor="end" font-size="8.2" letter-spacing="0.2" fill="#000" >BRN</text>
<text x="504.0" y="681" text-anchor="end" font-size="8.2" letter-spacing="0.2" fill="#000" >DK</text>
<text x="504.0" y="691" text-anchor="end" font-size="8.2" letter-spacing="0.2" fill="#000" >GRN</text>
<text x="475.59999999999997" y="704" text-anchor="end" font-size="8.2" letter-spacing="0.2" fill="#000" >B</text>
<text x="504.0" y="704" text-anchor="end" font-size="8.2" letter-spacing="0.2" fill="#000" >A</text>
<text x="489.5" y="751" text-anchor="end" font-size="8.2" letter-spacing="0.2" fill="#000" >G</text>
<text x="489.5" y="762" text-anchor="end" font-size="8.2" letter-spacing="0.2" fill="#000" >BLK</text>
<text x="522.5" y="707" text-anchor="start" font-size="8.2" letter-spacing="0.2" fill="#000" >RIGHT</text>
<text x="522.5" y="718" text-anchor="start" font-size="8.2" letter-spacing="0.2" fill="#000" >TAIL/</text>
<text x="522.5" y="728" text-anchor="start" font-size="8.2" letter-spacing="0.2" fill="#000" >TURN/</text>
<text x="522.5" y="738" text-anchor="start" font-size="8.2" letter-spacing="0.2" fill="#000" >STOP-</text>
<text x="522.5" y="748" text-anchor="start" font-size="8.2" letter-spacing="0.2" fill="#000" >LAMP</text>
<polyline points="69.9,743.5 69.9,785.8 282.2,785.8 296.5,771.7" fill="none" stroke="#1a1a1a" stroke-width="1.6" stroke-linejoin="miter" />
<polyline points="494.5,743.5 494.5,785.8 310.6,785.8 296.5,771.7" fill="none" stroke="#1a1a1a" stroke-width="1.6" stroke-linejoin="miter" />
<polyline points="197.1,743.3 197.1,771.7 381.2,771.7 381.2,743.3" fill="none" stroke="#1a1a1a" stroke-width="1.6" stroke-linejoin="miter" />
<line x1="296.5" y1="743.3" x2="296.5" y2="771.7" stroke="#1a1a1a" stroke-width="1.6" />
<line x1="296.5" y1="778.3000000000001" x2="296.5" y2="808.5" stroke="#1a1a1a" stroke-width="1.6" stroke-dasharray="9.2 4.4"/>
<circle cx="296.5" cy="771.7" r="6.3" fill="#fff"/>
<circle cx="296.5" cy="771.7" r="3.1" fill="#000"/>
<circle cx="296.5" cy="814" r="3.0" fill="#000"/>
<line x1="290.5" y1="816.9" x2="302.5" y2="816.9" stroke="#a0a0a0" stroke-width="1.5" />
<line x1="293.0" y1="819.4" x2="300.0" y2="819.4" stroke="#505050" stroke-width="1.0" />
<line x1="294.9" y1="821.5" x2="298.1" y2="821.5" stroke="#222" stroke-width="1.0" />
<text x="291.7" y="804" text-anchor="end" font-size="8.2" letter-spacing="0.2" fill="#000" >BLK</text>
<text x="304.5" y="817" text-anchor="start" font-size="8.2" letter-spacing="0.2" fill="#000" >G305</text>
<text x="304.5" y="828" text-anchor="start" font-size="8.2" letter-spacing="0.2" fill="#000" >(AT BASE OF RIGHT &quot;B&quot; PILLAR)</text>
<text x="19.8" y="835" text-anchor="start" font-size="8.2" letter-spacing="0.2" fill="#000" >79514</text>
<rect x="544.5" y="-3" width="70" height="11.4" rx="1" fill="#e8f4fc" stroke="#4a4a4a" stroke-width="1.2"/>
<line x1="564.8" y1="-1" x2="564.8" y2="8.4" stroke="#333" stroke-width="1.0" />
<line x1="564.8" y1="8.4" x2="564.8" y2="31.7" stroke="#000" stroke-width="2.0" />
<path d="M560.0,29.099999999999998 C561.3,31.099999999999998 562.2,31.7 563.1999999999999,31.7 L566.4,31.7 C567.3999999999999,31.7 568.3,31.099999999999998 569.5999999999999,29.099999999999998" fill="none" stroke="#3c3c3c" stroke-width="1.05" />
<path d="M560.0,33.9 C561.3,35.9 562.2,36.5 563.1999999999999,36.5 L566.4,36.5 C567.3999999999999,36.5 568.3,35.9 569.5999999999999,33.9" fill="none" stroke="#3c3c3c" stroke-width="1.05" />
<text x="560.1" y="20" text-anchor="end" font-size="8.2" letter-spacing="0.2" fill="#000" >NCA</text>
<text x="557.3000000000001" y="32" text-anchor="end" font-size="8.2" letter-spacing="0.2" fill="#000" >B</text>
<text x="560.1" y="48" text-anchor="end" font-size="8.2" letter-spacing="0.2" fill="#000" >BLK</text>
<line x1="593.2" y1="-1" x2="593.2" y2="8.4" stroke="#333" stroke-width="1.0" />
<line x1="593.2" y1="8.4" x2="593.2" y2="31.7" stroke="#000" stroke-width="2.0" />
<path d="M588.4000000000001,29.099999999999998 C589.7,31.099999999999998 590.6000000000001,31.7 591.6,31.7 L594.8000000000001,31.7 C595.8,31.7 596.7,31.099999999999998 598.0,29.099999999999998" fill="none" stroke="#3c3c3c" stroke-width="1.05" />
<path d="M588.4000000000001,33.9 C589.7,35.9 590.6000000000001,36.5 591.6,36.5 L594.8000000000001,36.5 C595.8,36.5 596.7,35.9 598.0,33.9" fill="none" stroke="#3c3c3c" stroke-width="1.05" />
<text x="588.2" y="20" text-anchor="end" font-size="8.2" letter-spacing="0.2" fill="#000" >NCA</text>
<text x="585.4000000000001" y="32" text-anchor="end" font-size="8.2" letter-spacing="0.2" fill="#000" >B</text>
<text x="588.2" y="48" text-anchor="end" font-size="8.2" letter-spacing="0.2" fill="#000" >BLK</text>
<polyline points="564.8,36.5 564.8,64.7 593.2,64.7" fill="none" stroke="#333" stroke-width="1.5" stroke-linejoin="miter" />
<line x1="593.2" y1="36.5" x2="593.2" y2="64.7" stroke="#333" stroke-width="1.5" />
<line x1="593.2" y1="71.3" x2="593.2" y2="87.5" stroke="#1a1a1a" stroke-width="1.6" stroke-dasharray="9.2 4.4"/>
<circle cx="593.2" cy="64.7" r="6.3" fill="#fff"/>
<circle cx="593.2" cy="64.7" r="3.1" fill="#000"/>
<circle cx="593.2" cy="93" r="3.0" fill="#000"/>
<line x1="587.2" y1="95.9" x2="599.2" y2="95.9" stroke="#a0a0a0" stroke-width="1.5" />
<line x1="589.7" y1="98.4" x2="596.7" y2="98.4" stroke="#505050" stroke-width="1.0" />
<line x1="591.6" y1="100.5" x2="594.8000000000001" y2="100.5" stroke="#222" stroke-width="1.0" />
<text x="588.2" y="81" text-anchor="end" font-size="8.2" letter-spacing="0.2" fill="#000" >BLK</text>
<text x="602.2" y="96" text-anchor="start" font-size="8.2" letter-spacing="0.2" fill="#000" >G305</text>
<text x="602.2" y="106" text-anchor="start" font-size="8.2" letter-spacing="0.2" fill="#000" >(AT BASE OF</text>
<text x="602.2" y="116" text-anchor="start" font-size="8.2" letter-spacing="0.2" fill="#000" >RIGHT &quot;B&quot; PILLAR)</text>
<rect x="966.3" y="-5" width="60" height="85.5" fill="#e8f4fc"/>
<line x1="966.3" y1="80.5" x2="1026.3" y2="80.5" stroke="#6a6a6a" stroke-width="1.15" stroke-dasharray="8.8 4.000" stroke-linecap="square"/>
<line x1="966.3" y1="80.5" x2="966.3" y2="-3.2" stroke="#6a6a6a" stroke-width="1.15" stroke-dasharray="8.8 3.683" stroke-linecap="square"/>
<line x1="1026.3" y1="80.5" x2="1026.3" y2="-3.2" stroke="#6a6a6a" stroke-width="1.15" stroke-dasharray="8.8 3.683" stroke-linecap="square"/>
<line x1="994.6" y1="-1" x2="994.6" y2="49" stroke="#777" stroke-width="1.1" stroke-dasharray="8.6 4.7"/>
<rect x="976.3" y="49" width="31.3" height="20.5" fill="#e8f4fc" stroke="#444" stroke-width="1.1"/>
<line x1="1003.4" y1="-1" x2="1003.4" y2="8.2" stroke="#333" stroke-width="1.1" />
<line x1="987.7" y1="-0.5" x2="1003.4" y2="8.2" stroke="#333" stroke-width="1.1" />
<circle cx="1003.4" cy="8.2" r="2.4" fill="#000"/>
<text x="1007.7" y="9" text-anchor="start" font-size="8.2" letter-spacing="0.2" fill="#000" >LPS</text>
<text x="1007.7" y="20" text-anchor="start" font-size="8.2" letter-spacing="0.2" fill="#000" >SW</text>
<path d="M963.8,17.6 A6,6 0 0 0 963.8,26.8" fill="none" stroke="#3c3c3c" stroke-width="1.2" />
<path d="M971,18 L966.6,22.2 L971,26.4 M966.6,22.2 L979.5,22.2" fill="none" stroke="#3c3c3c" stroke-width="1.0" />
<circle cx="979.5" cy="22.2" r="2.2" fill="#000"/>
<text x="895.8" y="17" text-anchor="start" font-size="8.2" letter-spacing="0.2" fill="#000" >9</text>
<text x="922.6" y="17" text-anchor="start" font-size="8.2" letter-spacing="0.2" fill="#000" >BRN</text>
<text x="949.5" y="17" text-anchor="start" font-size="8.2" letter-spacing="0.2" fill="#000" >H</text>
<text x="944.7" y="31" text-anchor="start" font-size="8.2" letter-spacing="0.2" fill="#000" >C1</text>
<line x1="944.5" y1="32.9" x2="955.8" y2="32.9" stroke="#333" stroke-width="1.0" />
<text x="1023.4000000000001" y="93" text-anchor="end" font-size="8.2" letter-spacing="0.2" fill="#000" >DAYTIME</text>
<text x="1023.4000000000001" y="103" text-anchor="end" font-size="8.2" letter-spacing="0.2" fill="#000" >RUNNING</text>
<text x="1023.4000000000001" y="114" text-anchor="end" font-size="8.2" letter-spacing="0.2" fill="#000" >LAMPS (DRL)</text>
<text x="1023.4000000000001" y="124" text-anchor="end" font-size="8.2" letter-spacing="0.2" fill="#000" >CONTROL</text>
<text x="1025.6000000000001" y="134" text-anchor="end" font-size="8.2" letter-spacing="0.2" fill="#000" >MODULE</text>
<text x="1025.4" y="145" text-anchor="end" font-size="8.2" letter-spacing="0.2" fill="#000" >(W/ DRL ONLY)</text>
<text x="1023.1" y="155" text-anchor="end" font-size="8.2" letter-spacing="0.2" fill="#000" >(BEHIND LEFT</text>
<text x="1023.1" y="165" text-anchor="end" font-size="8.2" letter-spacing="0.2" fill="#000" >SIDE OF</text>
<text x="1023.1" y="176" text-anchor="end" font-size="8.2" letter-spacing="0.2" fill="#000" >I/P, ON ELECTRONIC</text>
<text x="1023.1" y="186" text-anchor="end" font-size="8.2" letter-spacing="0.2" fill="#000" >BRAKE CONTROL</text>
<text x="1025.4" y="196" text-anchor="end" font-size="8.2" letter-spacing="0.2" fill="#000" >MODULE BRACKET)</text>
<circle cx="112.4" cy="93" r="6.3" fill="#fff"/>
<circle cx="112.4" cy="93" r="3.1" fill="#000"/>
<circle cx="296.3" cy="93" r="6.3" fill="#fff"/>
<circle cx="296.3" cy="93" r="3.1" fill="#000"/>
<circle cx="112.4" cy="319.2" r="6.3" fill="#fff"/>
<circle cx="112.4" cy="319.2" r="3.1" fill="#000"/>
<circle cx="409.4" cy="319.2" r="6.3" fill="#fff"/>
<circle cx="409.4" cy="319.2" r="3.1" fill="#000"/>
<circle cx="254" cy="375.6" r="6.3" fill="#fff"/>
<circle cx="254" cy="375.6" r="3.1" fill="#000"/>
<circle cx="833.8" cy="375.6" r="6.3" fill="#fff"/>
<circle cx="833.8" cy="375.6" r="3.1" fill="#000"/>
<circle cx="381" cy="573.9" r="6.3" fill="#fff"/>
<circle cx="381" cy="573.9" r="3.1" fill="#000"/>
</svg></body></html>
